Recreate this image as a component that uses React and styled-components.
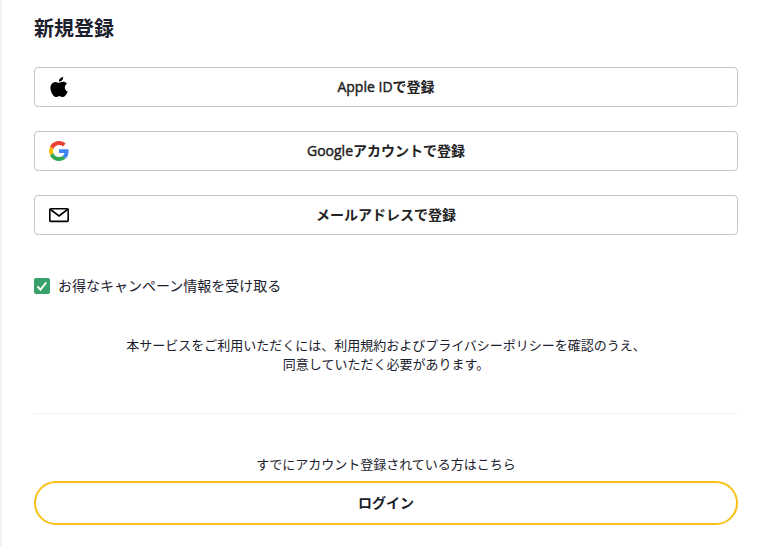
import React from "react";
import styled, { createGlobalStyle } from "styled-components";

const Global = createGlobalStyle`
  * { box-sizing: border-box; }
  body { margin: 0; background: #fff; color: #1a202c; font-family: "Noto Sans CJK JP", sans-serif; }
`;

const Page = styled.main`
  height: 546px;
  overflow: hidden;
  border-left: 2px solid #f2f2f2;
  padding: 13px 30px 0 32px;
`;

const Title = styled.h1`
  margin: 0 0 24px;
  font-size: 20px;
  line-height: 30px;
  font-weight: 700;
`;

const Providers = styled.div`
  display: grid;
  gap: 24px;
`;

const ProviderButton = styled.button`
  display: grid;
  grid-template-columns: 20px 1fr 20px;
  align-items: center;
  height: 40px;
  padding: 0 14px;
  border: 1px solid #c4c4c4;
  border-radius: 4px;
  background: #fff;
  color: #222;
  font: 700 14px/20px "Open Sans", "Noto Sans CJK JP", sans-serif;
  svg { display: block; }
`;

const Latin = styled.span`
  font-weight: 400;
  -webkit-text-stroke: 0.45px currentColor;
`;

const CheckLabel = styled.label`
  display: flex;
  align-items: center;
  gap: 8px;
  height: 20px;
  margin-top: 41px;
  font-size: 14px;
  line-height: 18px;
`;

const CheckText = styled.span`
  padding-bottom: 2px;
`;

const CheckBox = styled.span`
  display: block;
  width: 16px;
  height: 16px;
  border-radius: 2px;
  background: #38a169;
  svg { display: block; }
`;

const Terms = styled.p`
  margin: 39px 0 0;
  text-align: center;
  font-size: 13px;
  line-height: 19px;
`;

const Divider = styled.hr`
  margin: 40px 0 40px;
  border: 0;
  height: 1px;
  background: #eef0f4;
`;

const Prompt = styled.p`
  margin: 0;
  text-align: center;
  font-size: 13px;
  line-height: 19px;
`;

const LoginButton = styled.button`
  display: block;
  width: 100%;
  height: 44px;
  margin-top: 8px;
  padding: 0 0 2px;
  border: 2px solid #f9c117;
  border-radius: 22px;
  background: #fff;
  color: inherit;
  font: 700 14px/20px "Noto Sans CJK JP", sans-serif;
`;

const AppleIcon = () => (
  <svg width="20" height="20" viewBox="0.66 0 22.7 24" preserveAspectRatio="none">
    <path d="M12.152 6.896c-.948 0-2.415-1.078-3.96-1.04-2.04.027-3.91 1.183-4.961 3.014-2.117 3.675-.546 9.103 1.519 12.09 1.013 1.454 2.208 3.09 3.792 3.039 1.52-.065 2.09-.987 3.935-.987 1.831 0 2.35.987 3.96.948 1.637-.026 2.676-1.48 3.676-2.948 1.156-1.688 1.636-3.325 1.662-3.415-.039-.013-3.182-1.221-3.22-4.857-.026-3.04 2.48-4.494 2.597-4.559-1.429-2.09-3.623-2.324-4.39-2.376-2-.156-3.675 1.09-4.61 1.09zM15.53 3.83c.843-1.012 1.4-2.427 1.245-3.83-1.207.052-2.662.805-3.532 1.818-.78.896-1.454 2.338-1.273 3.714 1.338.104 2.715-.688 3.559-1.701" />
  </svg>
);

const GoogleIcon = () => (
  <svg width="20" height="20" viewBox="0 0 48 48">
    <path fill="#EA4335" d="M24 9.5c3.54 0 6.71 1.22 9.21 3.6l6.85-6.85C35.9 2.38 30.47 0 24 0 14.62 0 6.51 5.38 2.56 13.22l7.98 6.19C12.43 13.72 17.74 9.5 24 9.5z" />
    <path fill="#4285F4" d="M46.98 24.55c0-1.57-.15-3.09-.38-4.55H24v9.02h12.94c-.58 2.96-2.26 5.48-4.78 7.18l7.73 6c4.51-4.18 7.09-10.36 7.09-17.65z" />
    <path fill="#FBBC05" d="M10.53 28.59c-.48-1.45-.76-2.99-.76-4.59s.27-3.14.76-4.59l-7.98-6.19C.92 16.46 0 20.12 0 24c0 3.88.92 7.54 2.56 10.78l7.97-6.19z" />
    <path fill="#34A853" d="M24 48c6.48 0 11.93-2.13 15.89-5.81l-7.73-6c-2.15 1.45-4.92 2.3-8.16 2.3-6.26 0-11.57-4.22-13.47-9.91l-7.98 6.19C6.51 42.62 14.62 48 24 48z" />
  </svg>
);

const MailIcon = () => (
  <svg width="20" height="20" viewBox="0 0 20 20" fill="none" stroke="#000" strokeWidth="1.6">
    <rect x="0.8" y="3.8" width="18.4" height="12.6" rx="1" />
    <path d="M1.5 4.5 10 11l8.5-6.5" />
  </svg>
);

export default function App() {
  return (
    <>
      <Global />
      <Page>
        <Title>新規登録</Title>
        <Providers>
          <ProviderButton><AppleIcon /><span><Latin>Apple ID</Latin>で登録</span></ProviderButton>
          <ProviderButton><GoogleIcon /><span><Latin>Google</Latin>アカウントで登録</span></ProviderButton>
          <ProviderButton><MailIcon /><span>メールアドレスで登録</span></ProviderButton>
        </Providers>
        <CheckLabel>
          <CheckBox>
            <svg width="16" height="16" viewBox="0 0 16 16" fill="none" stroke="#fff" strokeWidth="2" strokeLinecap="round">
              <path d="m4 9 2.5 2.7L11.8 5" />
            </svg>
          </CheckBox>
          <CheckText>お得なキャンペーン情報を受け取る</CheckText>
        </CheckLabel>
        <Terms>
          本サービスをご利用いただくには、利用規約およびプライバシーポリシーを確認のうえ、
          <br />
          同意していただく必要があります。
        </Terms>
        <Divider />
        <Prompt>すでにアカウント登録されている方はこちら</Prompt>
        <LoginButton>ログイン</LoginButton>
      </Page>
    </>
  );
}
